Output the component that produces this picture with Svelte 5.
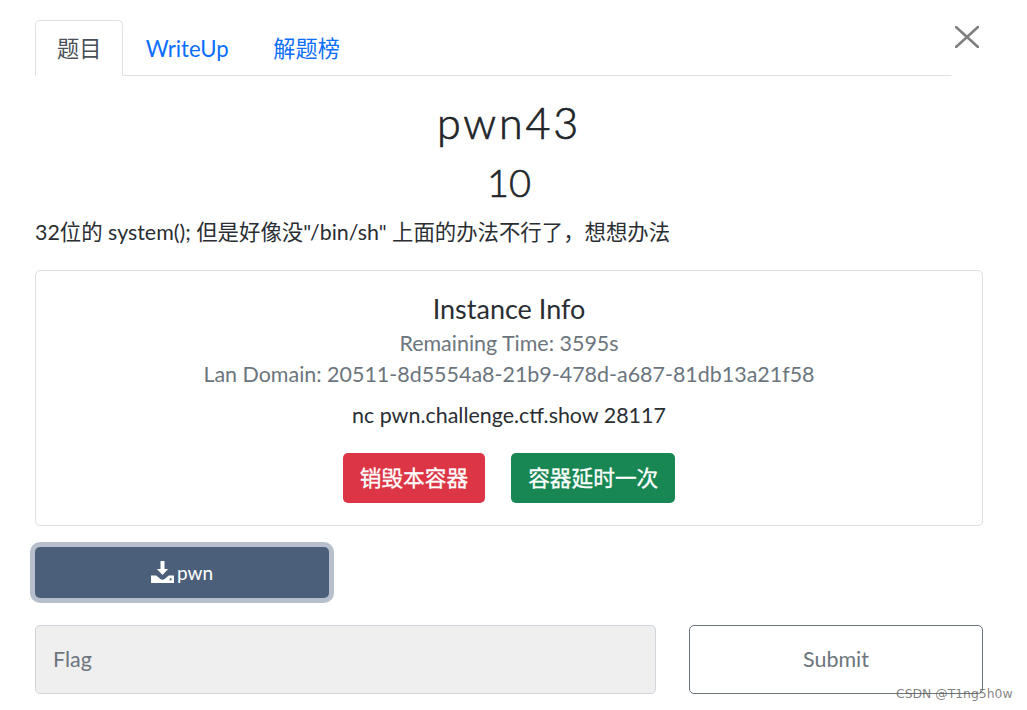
<script lang="ts">
let tabs = [
  { name: "题目", active: true },
  { name: "WriteUp", active: false },
  { name: "解题榜", active: false }
];
let flag = $state("");
</script>

<div class="modal">
  <button class="close" aria-label="Close">
    <svg width="24" height="22" viewBox="0 0 24 22"><path d="M1 1 L23 21 M23 1 L1 21" /></svg>
  </button>

  <ul class="tabs">
    {#each tabs as tab}
      <li class="tab" class:active={tab.active}>{tab.name}</li>
    {/each}
  </ul>

  <h1 class="title">pwn43</h1>
  <div class="score">10</div>
  <p class="desc">32位的 system(); 但是好像没"/bin/sh" 上面的办法不行了，想想办法</p>

  <div class="card">
    <h2 class="card-title">Instance Info</h2>
    <div class="muted">Remaining Time: 3595s</div>
    <div class="muted">Lan Domain: 20511-8d5554a8-21b9-478d-a687-81db13a21f58</div>
    <div class="addr">nc pwn.challenge.ctf.show 28117</div>
    <div class="actions">
      <button class="btn red">销毁本容器</button>
      <button class="btn green">容器延时一次</button>
    </div>
  </div>

  <button class="download">
    <svg width="23" height="22" viewBox="0 0 23 22">
      <path d="M9.5 0h4v8h3.6l-5.6 6-5.6-6h3.6z" />
      <path d="M0 14.5h5.2l4.2 3.6c1.2 1 3 1 4.2 0l4.2-3.6H23V22H0z" />
      <circle cx="19.6" cy="18.4" r="1.1" fill="#4c5f7a" />
    </svg>
    <span>pwn</span>
  </button>

  <div class="submit-row">
    <input class="flag" placeholder="Flag" bind:value={flag} />
    <button class="submit">Submit</button>
  </div>

  <div class="watermark">CSDN @T1ng5h0w</div>
</div>

<style>
:global(body) {
  background: #fff;
  overflow: hidden;
}
.modal {
  position: relative;
  height: 710px;
  box-sizing: border-box;
  padding: 20px 44px 0 35px;
  font-family: Lato, "Noto Sans CJK SC", sans-serif;
  font-size: 21.45px;
  line-height: 31px;
  color: #2a2e33;
}
.close {
  position: absolute;
  left: 955px;
  top: 26px;
  padding: 0;
  border: 0;
  background: none;
  line-height: 0;
}
.close path {
  stroke: #808080;
  stroke-width: 2.6;
  stroke-linecap: round;
  fill: none;
}
.tabs {
  display: flex;
  list-style: none;
  margin: 0 32px 0 0;
  padding: 0;
  height: 56px;
  box-sizing: border-box;
  border-bottom: 1px solid #dee2e6;
}
.tab {
  height: 56px;
  box-sizing: border-box;
  padding: 12px 21.3px;
  font-size: 22.2px;
  color: #0d6efd;
  border: 1px solid transparent;
  border-radius: 5px 5px 0 0;
}
.tab.active {
  padding: 12px 21px;
  color: #495057;
  background: #fff;
  border-color: #dee2e6 #dee2e6 #fff;
}
.title {
  margin: 19px 0 0;
  text-align: center;
  font-size: 43px;
  line-height: 56px;
  font-weight: 300;
  letter-spacing: 2.8px;
  -webkit-text-stroke: 0.7px #212529;
  color: #212529;
}
.score {
  margin-top: 7px;
  text-align: center;
  font-size: 38px;
  line-height: 48px;
  font-weight: 300;
  -webkit-text-stroke: 0.6px #212529;
  color: #212529;
}
.desc {
  margin: 11px 0 0;
  font-size: 21.4px;
  line-height: 30px;
}
.card {
  margin-top: 23px;
  height: 256px;
  box-sizing: border-box;
  padding: 19px 0 0;
  border: 1px solid #dfdfdf;
  border-radius: 5px;
  text-align: center;
}
.card-title {
  margin: 0 0 1px;
  font-size: 27px;
  line-height: 37px;
  font-weight: 400;
}
.muted {
  color: #6c757d;
}
.addr {
  margin-top: 10px;
}
.actions {
  display: flex;
  justify-content: center;
  gap: 26px;
  margin-top: 22px;
}
.btn {
  height: 50px;
  padding: 0 17px;
  border: 0;
  border-radius: 5px;
  color: #fff;
  font: inherit;
  font-size: 21.7px;
  -webkit-text-stroke: 0.3px #fff;
}
.red {
  background: #dc3545;
}
.green {
  background: #198754;
}
.download {
  display: flex;
  align-items: center;
  justify-content: center;
  gap: 3px;
  width: 294px;
  height: 51px;
  margin-top: 21px;
  padding: 0 0 1px;
  border: 0;
  border-radius: 5px;
  background: #4c5f7a;
  color: #fff;
  font: inherit;
  font-size: 19px;
  box-shadow: 0 0 0 5px #b7bfcc;
}
.download svg {
  fill: #fff;
}
.submit-row {
  display: flex;
  justify-content: space-between;
  margin-top: 27px;
}
.flag {
  width: 621px;
  height: 69px;
  box-sizing: border-box;
  padding: 0 0 2px 17px;
  border: 1px solid #ced4da;
  border-radius: 5px;
  background: #efefef;
  font: inherit;
}
.flag::placeholder {
  color: #6c757d;
  opacity: 1;
}
.submit {
  width: 294px;
  height: 69px;
  padding: 0;
  border: 1px solid #6c757d;
  border-radius: 5px;
  background: #fff;
  color: #6c757d;
  font: inherit;
}
.watermark {
  position: absolute;
  left: 896px;
  top: 686px;
  font-family: "DejaVu Sans", sans-serif;
  font-size: 12.4px;
  line-height: 16px;
  color: rgba(90, 90, 90, 0.75);
}
</style>
